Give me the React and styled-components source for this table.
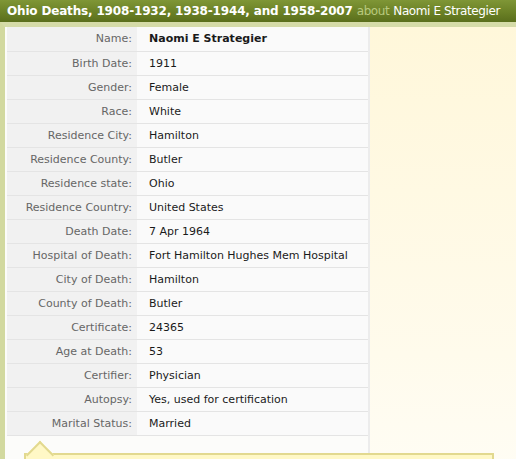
import React from "react"
import styled, { createGlobalStyle } from "styled-components"

const record = [
  ["Name", "Naomi E Strategier"],
  ["Birth Date", "1911"],
  ["Gender", "Female"],
  ["Race", "White"],
  ["Residence City", "Hamilton"],
  ["Residence County", "Butler"],
  ["Residence state", "Ohio"],
  ["Residence Country", "United States"],
  ["Death Date", "7 Apr 1964"],
  ["Hospital of Death", "Fort Hamilton Hughes Mem Hospital"],
  ["City of Death", "Hamilton"],
  ["County of Death", "Butler"],
  ["Certificate", "24365"],
  ["Age at Death", "53"],
  ["Certifier", "Physician"],
  ["Autopsy", "Yes, used for certification"],
  ["Marital Status", "Married"],
]

export default () => {
  return (
    <>
      <GlobalStyle />
      <Page>
        <Header>
          <Title>Ohio Deaths, 1908-1932, 1938-1944, and 1958-2007</Title>
          <About>about</About>
          <Person>Naomi E Strategier</Person>
        </Header>
        <Frame>
          <Table>
            <tbody>
              {record.map(([label, value], i) => (
                <Row key={label}>
                  <Label>{label}:</Label>
                  <Value $strong={i === 0}>{value}</Value>
                </Row>
              ))}
            </tbody>
          </Table>
          <Callout />
        </Frame>
      </Page>
    </>
  )
}

const GlobalStyle = createGlobalStyle`
  html, body {
    margin: 0;
    padding: 0;
    background: #fff;
  }
  body {
    font-family: "DejaVu Sans", Verdana, sans-serif;
  }
`

const Page = styled.div`
  width: 516px;
  height: 459px;
  overflow: hidden;
  display: flex;
  flex-direction: column;
`

const Header = styled.div`
  height: 22px;
  flex: none;
  display: flex;
  align-items: center;
  gap: 4px;
  padding-left: 7px;
  white-space: nowrap;
  font-size: 12px;
  letter-spacing: -0.4px;
  background: linear-gradient(to bottom, #7f9636 0%, #6b8126 55%, #5a6e1c 100%);
  color: #fff;
`

const Title = styled.span`
  font-weight: bold;
  letter-spacing: -0.17px;
`

const About = styled.span`
  color: #b9c97f;
`

const Person = styled.span`
  color: #fff;
`

const Frame = styled.div`
  flex: 1;
  border-top: 5px solid #d5dba8;
  border-left: 5px solid #d2d99f;
  padding-left: 2px;
  background:
    linear-gradient(to right, #fcfcfa 363px, #ececec 363px, #ececec 365px, transparent 365px),
    linear-gradient(to bottom, #fff7da 0%, #fffbec 70%, #fffdf6 100%);
`

const Table = styled.table`
  width: 361px;
  border-collapse: collapse;
  font-size: 11px;
`

const Row = styled.tr`
  height: 24px;
  border-bottom: 1px solid #e4e4e4;
`

const Label = styled.td`
  width: 125px;
  padding: 0 5px 0 0;
  text-align: right;
  color: #666;
  background: #f1f1f1;
  white-space: nowrap;
`

const Value = styled.td`
  padding: 0 0 0 12px;
  color: #1a1a1a;
  background: #fafafa;
  font-weight: ${p => (p.$strong ? "bold" : "normal")};
  white-space: nowrap;
`

const Callout = styled.div`
  position: relative;
  margin: 17px 0 0 17px;
  width: 466px;
  height: 40px;
  border: 1px solid #e2d98f;
  border-width: 2px 2px 0 2px;
  background: #fff8c6;

  &::before {
    content: "";
    position: absolute;
    left: 4px;
    top: -10px;
    width: 18px;
    height: 18px;
    background: #fff8c6;
    border-top: 2px solid #e2d98f;
    border-left: 2px solid #e2d98f;
    transform: rotate(45deg);
  }
`
